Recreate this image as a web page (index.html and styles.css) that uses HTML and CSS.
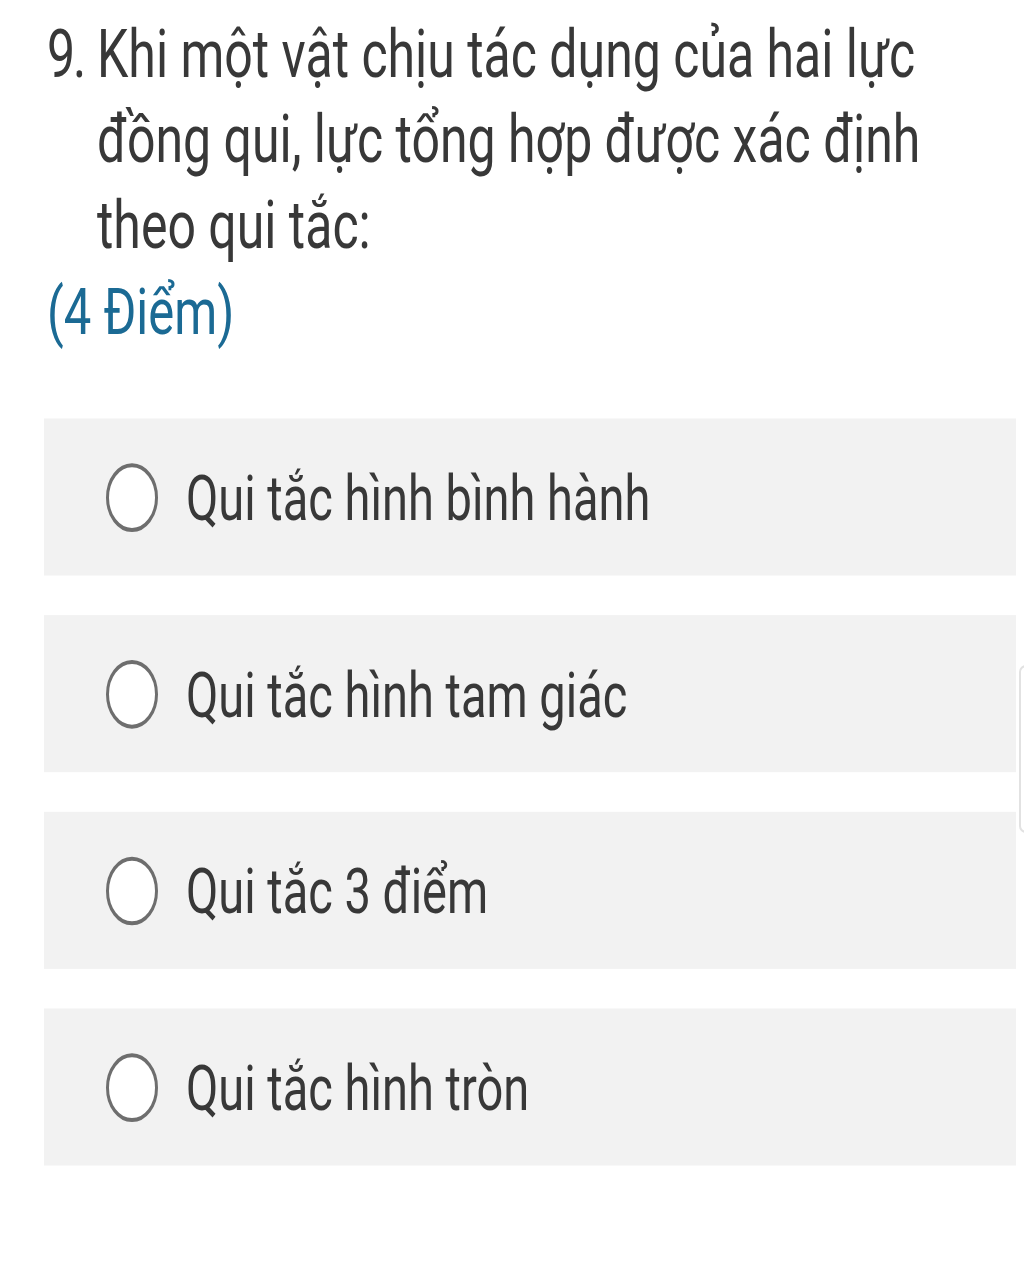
FILE: index.html
```html
<!DOCTYPE html>
<html lang="vi">
<head>
<meta charset="utf-8">
<link rel="stylesheet" href="styles.css">
</head>
<body>
<div class="page">
  <div class="question">
    <span class="num">9.</span><span class="qtext">Khi một vật chịu tác dụng của hai lực đồng qui, lực tổng hợp được xác định theo qui tắc:</span>
  </div>
  <div class="points">(4 Điểm)</div>
  <div class="options">
    <label class="option"><span class="radio"></span><span class="label">Qui tắc hình bình hành</span></label>
    <label class="option"><span class="radio"></span><span class="label">Qui tắc hình tam giác</span></label>
    <label class="option"><span class="radio"></span><span class="label">Qui tắc 3 điểm</span></label>
    <label class="option"><span class="radio"></span><span class="label">Qui tắc hình tròn</span></label>
  </div>
</div>
<div class="scrollthumb"></div>
</body>
</html>
```
FILE: styles.css
```css
html, body {
  margin: 0;
  padding: 0;
  background: #ffffff;
}
body {
  width: 1024px;
  height: 1280px;
  overflow: hidden;
  position: relative;
  font-family: Roboto, "Noto Sans", sans-serif;
}
.page {
  width: 1024px;
  transform: scaleY(1.32);
  transform-origin: 0 0;
}
.question {
  display: flex;
  padding: 9px 0 0 47px;
  font-size: 50px;
  line-height: 65px;
  color: #383838;
}
.num {
  width: 50px;
  flex: none;
  letter-spacing: -2px;
}
.qtext {
  width: 880px;
}
.points {
  padding-left: 47px;
  font-size: 49px;
  line-height: 65px;
  color: #1b6a94;
}
.options {
  display: flex;
  flex-direction: column;
  gap: 30px;
  margin-top: 48px;
  margin-left: 44px;
  width: 972px;
}
.option {
  display: flex;
  align-items: center;
  height: 119px;
  background: #f2f2f2;
  padding-left: 62px;
  box-sizing: border-box;
}
.radio {
  width: 52px;
  height: 52px;
  box-sizing: border-box;
  border: 3px solid #6e6e6e;
  border-radius: 50%;
  background: #ffffff;
  margin-right: 28px;
  flex: none;
}
.label {
  font-size: 47px;
  color: #383838;
  padding-top: 2px;
}
.scrollthumb {
  position: absolute;
  left: 1019px;
  top: 665px;
  width: 14px;
  height: 168px;
  border: 2px solid #e2e2e2;
  border-radius: 10px;
  box-sizing: border-box;
}
```
